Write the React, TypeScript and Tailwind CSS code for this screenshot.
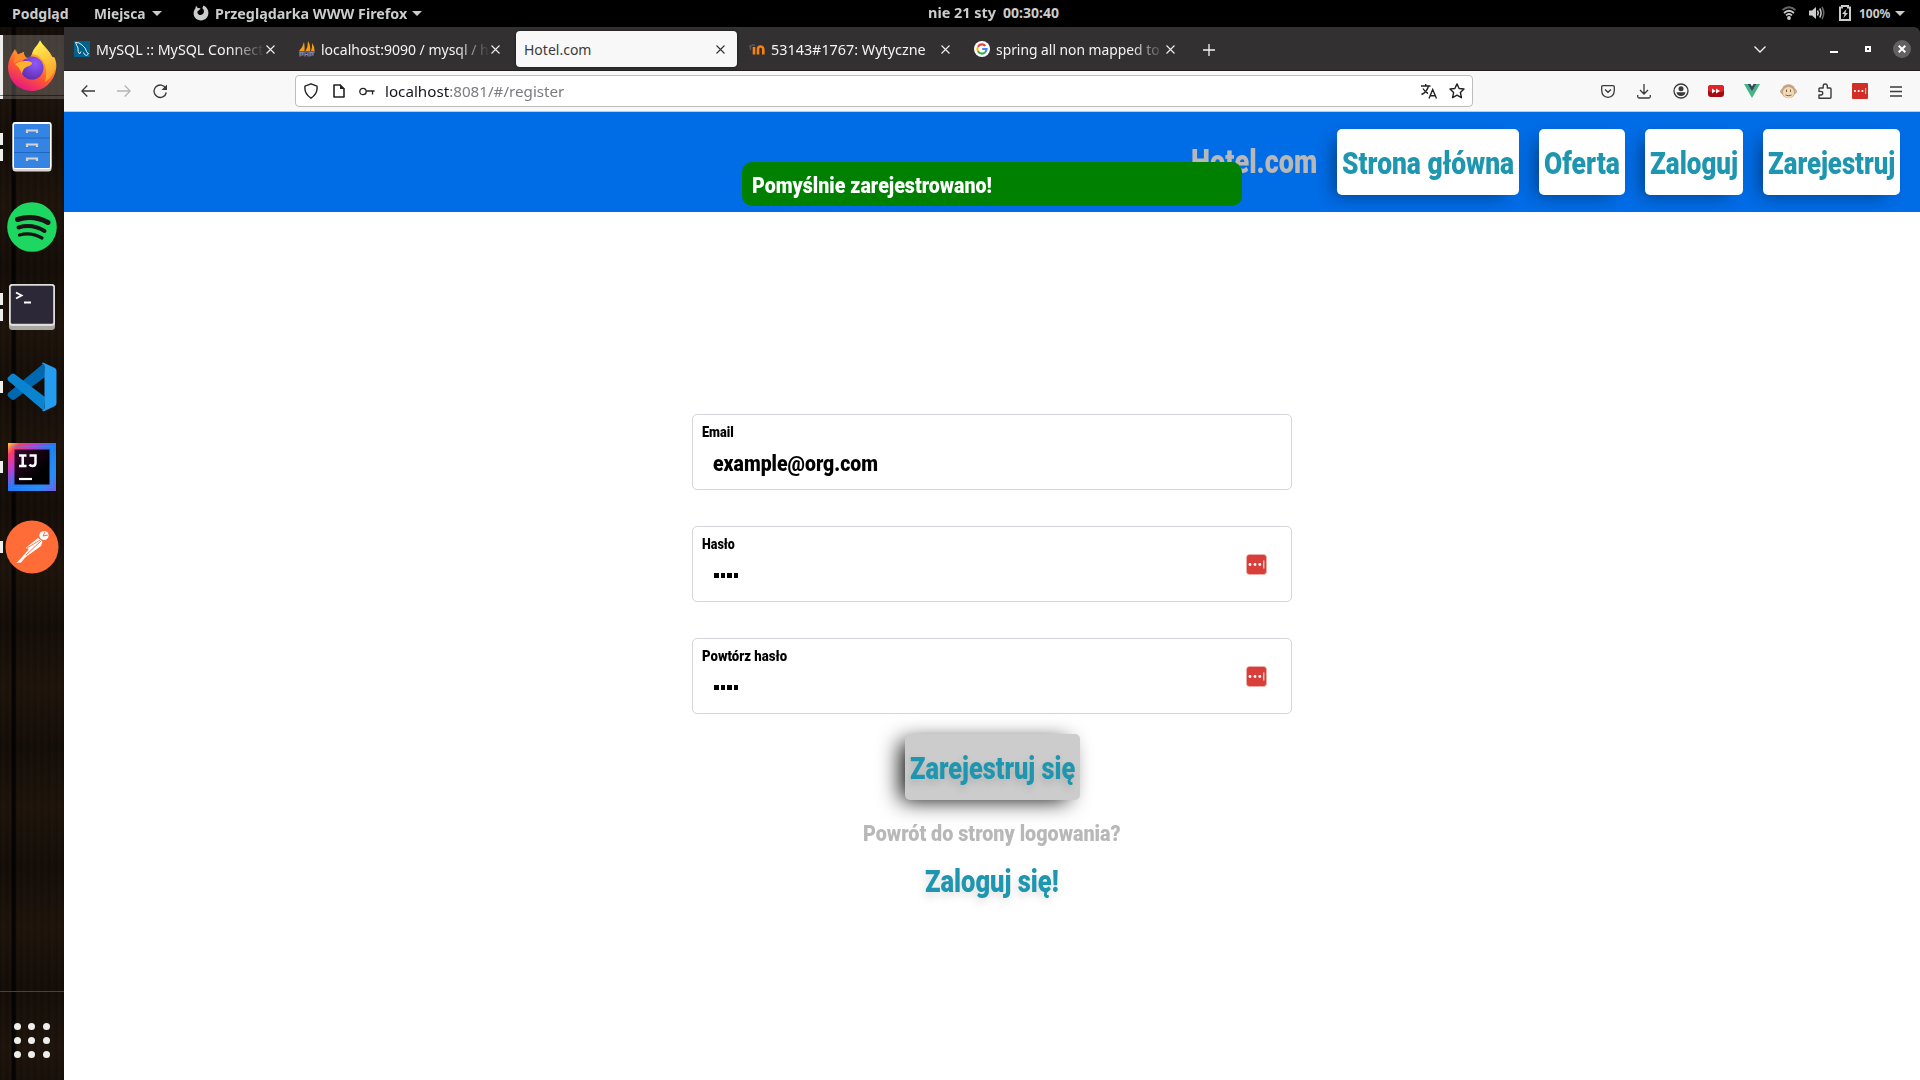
import { useLayoutEffect, useRef, useState, type ReactNode } from "react";

/** Single-line text that is condensed or stretched to fill a given width. */
function Fit({ w, className = "", children }: { w: number; className?: string; children: ReactNode }) {
  const ref = useRef<HTMLSpanElement>(null);
  const [k, setK] = useState(1);
  useLayoutEffect(() => {
    if (ref.current) setK(w / ref.current.offsetWidth);
  }, [w]);
  return (
    <span className="block shrink-0" style={{ width: w }}>
      <span
        ref={ref}
        className={"inline-block origin-left whitespace-nowrap align-top " + className}
        style={{ transform: `scaleX(${k})` }}
      >
        {children}
      </span>
    </span>
  );
}

function Caret({ className = "" }: { className?: string }) {
  return (
    <svg width="10" height="5" viewBox="0 0 10 5" className={"shrink-0 " + className}>
      <path d="M0 0H10L5 5Z" fill="#ccc" />
    </svg>
  );
}

function TopBar() {
  return (
    <header className="flex h-[27px] shrink-0 items-center bg-black pb-px font-['Noto_Sans'] text-[14px] leading-5 font-bold text-[#cccccc]">
      <div className="pt-px pl-3">
        <Fit w={57}>Podgląd</Fit>
      </div>
      <div className="w-[25px]" />
      <div className="pt-px">
        <Fit w={52}>Miejsca</Fit>
      </div>
      <Caret className="ml-[6px]" />
      <svg width="16" height="16" viewBox="0 0 16 16" className="mr-[6px] ml-[31px] shrink-0">
        <path
          d="M3 .8 5 3.2C6 2.8 7 3 7.6 3.8L5.6 5.4C4.4 6 4 7.2 4.8 8.4 6 10.400 9 10.400 10.300 8.600 11.600 6.700 11 4.500 9.300 3.300L10.400 .6C13.800 2 15.600 5 15.400 8.300 15.200 12.500 12 15.400 8 15.400 3.800 15.400.6 12.500.6 8.300.6 6 1.600 4.300 2.400 3.400Z"
          fill="#ccc"
        />
      </svg>
      <div className="pt-px">
        <Fit w={192}>Przeglądarka WWW Firefox</Fit>
      </div>
      <Caret className="ml-[5px]" />
      <div className="ml-[506px] flex gap-[7px]">
        <Fit w={68}>nie 21 sty</Fit>
        <Fit w={56}>00:30:40</Fit>
      </div>
      <div className="ml-auto flex items-center pr-[15px]">
        <svg width="14" height="14" viewBox="0 0 14 14" fill="none" strokeWidth="1.8" className="mr-[13px]">
          <path d="M.5 4Q7-1.500 13.500 4" stroke="#666" />
          <path d="M2 7Q7 2.400 12 7" stroke="#ccc" />
          <path d="M4 9.300Q7 6.600 10 9.300" stroke="#ccc" />
          <circle cx="7" cy="12" r="1.900" fill="#ccc" />
        </svg>
        <svg width="16" height="14" viewBox="0 0 16 14" fill="none" className="mr-[14px]">
          <path d="M0 4.500H3L7 1V13L3 9.500H0Z" fill="#ccc" />
          <path d="M8.500 4.500Q10 7 8.500 9.500M10.700 2.500Q13.500 7 10.700 11.500" stroke="#ccc" strokeWidth="1.500" />
          <path d="M13 1Q16.500 7 13 13" stroke="#666" strokeWidth="1.500" />
        </svg>
        <svg width="12" height="16" viewBox="0 0 12 16" className="mr-2">
          <path d="M3 1H9V2.500H11V15H1V2.500H3Z" fill="none" stroke="#ccc" strokeWidth="2" />
          <path d="M7.500 4 3 9H5.500L4.500 13 9 8H6.500Z" fill="#ccc" />
        </svg>
        <div className="pt-px">
          <Fit w={31} className="text-[12px]">100%</Fit>
        </div>
        <Caret className="ml-[5px]" />
      </div>
    </header>
  );
}

function FirefoxIcon() {
  return (
    <svg width="50" height="51" viewBox="0 0 50 51" className="mb-[3px]">
      <defs>
        <linearGradient id="ffBody" x1=".8" y1="0" x2=".3" y2="1">
          <stop offset="0" stopColor="#fff44f" />
          <stop offset=".35" stopColor="#ffa02e" />
          <stop offset=".65" stopColor="#ff5634" />
          <stop offset="1" stopColor="#e31587" />
        </linearGradient>
        <radialGradient id="ffGlobe" cx=".65" cy=".3" r=".8">
          <stop offset="0" stopColor="#9059ff" />
          <stop offset="1" stopColor="#5b2ba8" />
        </radialGradient>
        <linearGradient id="ffTail" x1=".3" y1="0" x2=".6" y2="1">
          <stop offset="0" stopColor="#fff44f" />
          <stop offset="1" stopColor="#ff9a2b" />
        </linearGradient>
      </defs>
      <path d="M8 9C9 12 10 13 11 14.500L17 12C16.500 16 19 18 22 19L33 .5C36 6 42 10 44 15 46 18 46 18 47 17 50 22 49.500 27 49 29 47 42 37 51 25 51 11 51 1 40 1 27 1 21 4 15 8 9Z" fill="url(#ffBody)" />
      <path d="M25 14C27 6 32 5 33 .5 36 6 42 10 44 15 46 18 46 18 47 17 50 24 48 36 38 42 40 35 41 22 30 15Z" fill="url(#ffTail)" />
      <circle cx="25" cy="28" r="11.500" fill="url(#ffGlobe)" />
      <path d="M8 24C12 21 20 20 24 22 26 23 25 25 22 26 18 27 16 29 15 34 13 30 13 28 8 24Z" fill="#ffb02e" />
      <path d="M9 9C9 12 10 13 11 14.500L17 12C16.500 15 18 17 21 18.500 13 19 10 22 7 23Z" fill="#ff8a2b" />
    </svg>
  );
}

function FilesIcon() {
  return (
    <svg width="40" height="50" viewBox="0 0 40 50">
      <rect x=".5" y="0" width="39" height="49.500" rx="3" fill="#d8d8d6" />
      <rect x=".5" y="0" width="39" height="47" rx="3" fill="#fff" />
      <rect x="2" y="2" width="36" height="44" rx="1" fill="#3584e4" />
      <path d="M2 16H38M2 30.500H38" stroke="#1f66c0" />
      <g fill="none" stroke="#d5d3cf" strokeWidth="2.200">
        <path d="M15 11V8.500H25V11M15 25V22.500H25V25M15 39V36.500H25V39" />
      </g>
    </svg>
  );
}

function SpotifyIcon() {
  return (
    <svg width="50" height="50" viewBox="0 0 50 50">
      <circle cx="25" cy="25" r="24.800" fill="#1ed760" />
      <g fill="none" stroke="#191414" strokeLinecap="round">
        <path d="M10.500 17.500Q26 12.500 41 20.500" strokeWidth="5" />
        <path d="M11.500 25.500Q25 21.500 37.500 29" strokeWidth="4" />
        <path d="M12.500 33Q24 29.800 35 36" strokeWidth="3.200" />
      </g>
    </svg>
  );
}

function TerminalIcon() {
  return (
    <svg width="46" height="46" viewBox="0 0 46 46">
      <rect width="46" height="46" rx="3.500" fill="#a9a7a3" />
      <rect width="46" height="42" rx="3.500" fill="#deddda" />
      <rect x="1.800" y="1.800" width="42.400" height="38" rx="1.500" fill="#2d2838" />
      <path d="M7 8.500 12.500 11.500 7 14.500M15 18.500H22" fill="none" stroke="#fff" strokeWidth="1.900" />
    </svg>
  );
}

function CodeIcon() {
  return (
    <svg width="50" height="50" viewBox="0 0 50 50">
      <path d="M37 1 38 15 7.500 37.500Q5.500 38.500 4 37L.8 34Q0 32.500 1 31Z" fill="#0068b0" />
      <path d="M37 49 38 35 7.500 12Q5.500 11 4 12.500L.8 15.500Q0 17 1 18.500Z" fill="#0a84d0" />
      <path d="M36 .5 48 6Q49.500 7 49.500 9V41Q49.500 43 48 44L37 49.300Q35.500 49.500 34.500 48.500 37 49 37.500 46V4Q37 1.500 34.500 1.300Z" fill="#249df0" />
    </svg>
  );
}

function IdeaIcon() {
  return (
    <svg width="48" height="48" viewBox="0 0 48 48">
      <defs>
        <linearGradient id="ijA" x1="0" y1="0" x2="1" y2="1">
          <stop offset="0" stopColor="#ffd43b" />
          <stop offset=".13" stopColor="#fc3b66" />
          <stop offset=".3" stopColor="#c03bd0" />
          <stop offset=".5" stopColor="#1f7cf5" />
          <stop offset=".8" stopColor="#2b8cf7" />
          <stop offset="1" stopColor="#7a58ea" />
        </linearGradient>
        <linearGradient id="ijB" x1="0" y1="0" x2="1" y2="1">
          <stop offset="0" stopColor="#38062f" />
          <stop offset=".7" stopColor="#000" />
        </linearGradient>
      </defs>
      <rect width="48" height="48" fill="url(#ijA)" />
      <rect x="3.500" y="3.500" width="41" height="41" fill="none" stroke="#17a7f4" strokeOpacity=".35" />
      <rect x="6.500" y="6.500" width="35" height="35" fill="url(#ijB)" />
      <path d="M11 12.500H18.500M14.700 12.500V23M11 23H18.500M21.500 12.500H27.500V20Q27.500 23 24.500 23 22.500 23 21.500 21.500" fill="none" stroke="#fff" strokeWidth="2.500" />
      <path d="M11 36H24" stroke="#fff" strokeWidth="2.200" />
    </svg>
  );
}

function PostmanIcon() {
  return (
    <svg width="54" height="54" viewBox="0 0 54 54">
      <circle cx="27" cy="27" r="26.500" fill="#ff6c37" />
      <circle cx="39" cy="15.500" r="4.600" fill="#fff" />
      <path d="M40 12 38 16 43 15" fill="none" stroke="#ff6c37" />
      <path d="M33 18 37.500 21.500 36 26 20 37.500 18.500 35.500 24 29 20.500 28Z" fill="#fff" />
      <path d="M36 21 21 35M35 20 22 28" stroke="#ff6c37" strokeWidth=".9" />
      <path d="M19 35 20.500 37 16 42.500 11.500 43Z" fill="#fff" />
    </svg>
  );
}

function DockItem({ marks, children, active = false }: { marks: number; children: ReactNode; active?: boolean }) {
  return (
    <div className={"relative flex h-16 w-16 shrink-0 items-center justify-center " + (active ? "bg-white/20" : "")}>
      {active ? (
        <div className="absolute top-0 left-0 h-full w-[3px] bg-[#eeeeec]" />
      ) : (
        <div className="absolute top-0 left-0 flex h-full flex-col justify-center gap-1">
          {Array.from({ length: marks }, (_, i) => (
            <div key={i} className="h-3 w-[3px] bg-[#eeeeec]" />
          ))}
        </div>
      )}
      {active && <div className="absolute bottom-[3px] left-0 h-px w-full bg-black/50" />}
      {children}
    </div>
  );
}

function Dock() {
  return (
    <nav className="flex w-16 shrink-0 flex-col bg-[#18100a] bg-[linear-gradient(90deg,transparent_11px,rgba(0,0,0,.75)_12px,rgba(0,0,0,.75)_15px,transparent_17px),repeating-linear-gradient(90deg,rgba(0,0,0,.14)_0px,rgba(90,60,30,.06)_3px,rgba(0,0,0,.06)_7px),repeating-linear-gradient(180deg,rgba(0,0,0,.2)_0px,rgba(80,55,30,.1)_60px,rgba(0,0,0,.2)_120px)]">
      <div className="flex flex-col gap-4 pt-2">
        <DockItem marks={0} active><FirefoxIcon /></DockItem>
        <DockItem marks={2}><FilesIcon /></DockItem>
        <DockItem marks={0}><SpotifyIcon /></DockItem>
        <DockItem marks={2}><TerminalIcon /></DockItem>
        <DockItem marks={1}><CodeIcon /></DockItem>
        <DockItem marks={1}><IdeaIcon /></DockItem>
        <DockItem marks={1}><PostmanIcon /></DockItem>
      </div>
      <div className="mt-auto h-[89px] border-t border-[#4a423c] pt-[31px]">
        <div className="mx-auto grid w-9 grid-cols-3 gap-x-[7px] gap-y-[7px]">
          {Array.from({ length: 9 }, (_, i) => (
            <div key={i} className="size-[7px] rounded-full bg-[#eeeeec]" />
          ))}
        </div>
      </div>
    </nav>
  );
}

function Cross({ dark = false }: { dark?: boolean }) {
  return (
    <svg width="9" height="9" viewBox="0 0 9 9" className="mr-3 ml-auto shrink-0">
      <path d="M.5.5 8.500 8.500M8.500.5.5 8.500" stroke={dark ? "#333" : "#f0f0f0"} strokeWidth="1.100" />
    </svg>
  );
}

function Tab({ icon, title, w, active = false, fade = false }: { icon?: ReactNode; title: string; w: number; active?: boolean; fade?: boolean }) {
  return (
    <div className={"flex h-9 w-[221px] shrink-0 items-center rounded pl-2 " + (active ? "bg-[#f8f8f8] text-[#3c3a3b] shadow-[0_0_3px_rgba(0,0,0,.6)]" : "text-[#f4f4f4]")}>
      {icon && <div className="mr-[6px] size-4 shrink-0">{icon}</div>}
      <div className={"w-[169px] shrink-0 pt-[2px] " + (fade ? "[mask-image:linear-gradient(90deg,#000_80%,transparent)]" : "")}>
        <Fit w={w} className="text-[14px]">{title}</Fit>
      </div>
      <Cross dark={active} />
    </div>
  );
}

function TabStrip() {
  return (
    <div className="flex h-11 shrink-0 items-start gap-1 rounded-tr-md border-b border-[#1f1d1e] bg-[#323031] pt-1 pl-[2px] font-['Noto_Sans'] leading-5">
      <Tab
        w={167}
        fade
        title="MySQL :: MySQL Connect"
        icon={
          <svg viewBox="0 0 16 16">
            <rect width="16" height="16" fill="#00618a" />
            <path d="M1.500 1.500Q5 1 8 4 12 7 12.500 10.500L14.500 13 12.500 14.500Q10 14 9.500 11.500M1.500 1.500Q3 5 4 7 3.500 11 5.500 13L7 10.500" fill="none" stroke="#e6f1f6" strokeWidth="1" />
          </svg>
        }
      />
      <Tab
        w={168}
        fade
        title="localhost:9090 / mysql / h"
        icon={
          <svg viewBox="0 0 16 16">
            <path d="M5 1Q6 6 5.500 10H0Q4 6 5 1ZM9 0Q12 5 11 10H6.500Q9 6 9 0ZM13 2Q16 6 15.500 10H12Q13.500 6 13 2Z" fill="#f89c0e" />
            <path d="M0 11H16M1 15.500V12H4V14H1M6 12V15.500M6 13.500H9M9 12V15.500M11 15.500V12H14V14H11" fill="none" stroke="#8485b4" strokeWidth="1.200" />
          </svg>
        }
      />
      <Tab w={67} active title="Hotel.com" />
      <Tab
        w={155}
        title="53143#1767: Wytyczne"
        icon={
          <svg viewBox="0 0 16 16" fill="none">
            <path d="M0 5.500 4 3.800 6 4.500M1.500 5V9" stroke="#5f5652" strokeWidth="1.500" />
            <path d="M5 13.500V6M9 13.500V8Q9 5.500 11.500 5.500T14.300 8V13.500" stroke="#f98012" strokeWidth="2.600" />
          </svg>
        }
      />
      <Tab
        w={164}
        fade
        title="spring all non mapped to"
        icon={
          <svg viewBox="0 0 16 16" fill="none" strokeWidth="2.100">
            <circle cx="8" cy="8" r="8" fill="#fff" />
            <path d="M11.400 4.900A4.600 4.600 0 0 0 4 5.700" stroke="#ea4335" />
            <path d="M4 5.700A4.600 4.600 0 0 0 4 10.300" stroke="#fbbc05" />
            <path d="M4 10.300A4.600 4.600 0 0 0 11 11.500" stroke="#34a853" />
            <path d="M11 11.500A4.600 4.600 0 0 0 12.600 8H8.200" stroke="#4285f4" />
          </svg>
        }
      />
      <svg width="12" height="12" viewBox="0 0 12 12" className="mt-[13px] ml-[12px]">
        <path d="M6 0V12M0 6H12" stroke="#f4f4f4" strokeWidth="1.300" />
      </svg>
      <div className="mt-[9px] mr-[9px] ml-auto flex h-[18px] items-center">
        <svg width="12" height="7" viewBox="0 0 12 7" className="mr-16" fill="none">
          <path d="M.5.5 6 6 11.500.5" stroke="#f4f4f4" strokeWidth="1.300" />
        </svg>
        <div className="mt-[6px] mr-[27px] h-[2px] w-2 bg-white" />
        <div className="mr-[22px] size-[6px] border-2 border-white" />
        <div className="flex size-[18px] items-center justify-center rounded-full bg-[#636263]">
          <svg width="8" height="8" viewBox="0 0 8 8">
            <path d="M.7.7 7.300 7.300M7.300.7.7 7.300" stroke="#fff" strokeWidth="2" />
          </svg>
        </div>
      </div>
    </div>
  );
}

function PasswordBadge() {
  return (
    <svg width="21" height="21" viewBox="0 0 21 21">
      <rect x=".5" y=".5" width="20" height="20" rx="3" fill="#d93f3a" stroke="#f0b5b2" strokeWidth=".6" />
      <g fill="#fff">
        <circle cx="4" cy="10.500" r="1.400" />
        <circle cx="9" cy="10.500" r="1.400" />
        <circle cx="13.800" cy="10.500" r="1.400" />
        <rect x="17.300" y="6.500" width="1" height="8" />
      </g>
    </svg>
  );
}

function Toolbar() {
  return (
    <div className="flex h-[41px] shrink-0 items-center border-b border-[#c9c9cb] bg-[#f8f8f8] pl-[17px] font-['Noto_Sans']">
      <svg width="14" height="12" viewBox="0 0 14 12" fill="none" stroke="#3a3a3a" strokeWidth="1.300">
        <path d="M14 6H1M6.300.5.800 6 6.300 11.500" />
      </svg>
      <svg width="14" height="12" viewBox="0 0 14 12" fill="none" stroke="#b4b4b4" strokeWidth="1.300" className="ml-[22px]">
        <path d="M0 6H13M7.700.5 13.200 6 7.700 11.500" />
      </svg>
      <svg width="15" height="15" viewBox="0 0 15 15" fill="none" className="ml-[22px]">
        <path d="M12.800 4.500A6.200 6.200 0 1 0 13.300 8.500" stroke="#3a3a3a" strokeWidth="1.400" />
        <path d="M14 .5V6H8.500Z" fill="#3a3a3a" />
      </svg>
      <div className="ml-[127px] flex h-8 w-[1178px] shrink-0 items-center rounded border border-[#bdbdc0] bg-white pl-2 text-[#222]">
        <svg width="14" height="16" viewBox="0 0 14 16" fill="none" stroke="#222" strokeWidth="1.400">
          <path d="M7 .8 13 3.200Q14 10.500 7 15.200 0 10.500 1 3.200Z" strokeLinejoin="round" />
        </svg>
        <svg width="12" height="14" viewBox="0 0 12 14" className="ml-[15px]">
          <path d="M1 1H7L11 5V13H1Z" fill="none" stroke="#222" strokeWidth="1.600" strokeLinejoin="round" />
          <path d="M7 0V5H12Z" fill="#222" />
        </svg>
        <svg width="16" height="9" viewBox="0 0 16 9" fill="none" stroke="#222" strokeWidth="1.300" className="mr-[10px] ml-[14px]">
          <circle cx="4" cy="4.500" r="3.200" />
          <path d="M7.200 4H15.500M13.500 4V7.500" />
        </svg>
        <div className="pt-[3px]">
          <Fit w={179} className="text-[14.500px] leading-5">
            <span className="text-[#15141a]">localhost</span>
            <span className="text-[#7b7b80]">:8081/#/register</span>
          </Fit>
        </div>
        <svg width="16" height="15" viewBox="0 0 16 15" fill="none" stroke="#222" strokeWidth="1.400" className="mr-3 ml-auto">
          <path d="M0 2H9.500M4.700 0V2M7.500 2Q6 8 .5 10.500M2 4.500Q4 8 7 9.500M8 14.500 11.700 5.500 15.500 14.500M9.300 11.700H14.200" />
        </svg>
        <svg width="16" height="16" viewBox="0 0 16 16" fill="none" stroke="#222" strokeWidth="1.400" strokeLinejoin="round" className="mr-[7px]">
          <path d="M8 .9 10.100 5.500 15 6 11.400 9.500 12.400 14.700 8 12.200 3.600 14.700 4.600 9.500 1 6 5.900 5.500Z" />
        </svg>
      </div>
      <div className="mr-[18px] ml-auto flex items-center">
        <svg width="14" height="13" viewBox="0 0 14 13" fill="none" stroke="#3a3a3a" strokeWidth="1.300">
          <path d="M2 .7H12Q13.300.7 13.300 2V5.500Q13 12 7 12.300 1 12 .7 5.500V2Q.7.700 2 .7ZM4 4.500 7 7.300 10 4.500" />
        </svg>
        <svg width="14" height="15" viewBox="0 0 14 15" fill="none" stroke="#3a3a3a" strokeWidth="1.300" className="ml-[22px]">
          <path d="M7 0V10M3 6 7 10 11 6M.7 11V12.500Q.7 14 2 14H12Q13.300 14 13.300 12.500V11" />
        </svg>
        <svg width="16" height="16" viewBox="0 0 16 16" className="ml-[22px]">
          <circle cx="8" cy="8" r="7" fill="none" stroke="#3a3a3a" strokeWidth="1.300" />
          <circle cx="8" cy="5.800" r="2.500" fill="#3a3a3a" />
          <path d="M3.500 9.300H12.500Q12 13 8 13T3.500 9.300Z" fill="#3a3a3a" />
        </svg>
        <svg width="16" height="12" viewBox="0 0 16 12" className="ml-[19px]">
          <rect width="16" height="12" rx="3" fill="#a60a10" />
          <rect width="16" height="7" rx="3" fill="#e0242a" />
          <path d="M4 3.500 7.500 6 4 8.500ZM8 3.500 12 6 8 8.500Z" fill="#fff" />
        </svg>
        <svg width="16" height="14" viewBox="0 0 16 14" className="mb-px ml-5">
          <path d="M0 0H3.500L8 7.500 12.500 0H16L8 14Z" fill="#41b883" />
          <path d="M3.500 0H6.500L8 2.500 9.500 0H12.500L8 7.500Z" fill="#35495e" />
        </svg>
        <svg width="17" height="16" viewBox="0 0 17 16" className="ml-5">
          <circle cx="2.300" cy="8.500" r="1.900" fill="#e9c9a4" stroke="#bd9a78" strokeWidth=".8" />
          <circle cx="14.700" cy="8.500" r="1.900" fill="#e9c9a4" stroke="#bd9a78" strokeWidth=".8" />
          <circle cx="8.500" cy="8.300" r="7" fill="#c2a283" />
          <ellipse cx="8.500" cy="9.500" rx="5.600" ry="5.500" fill="#f2d9b5" />
          <path d="M6.500 6.500V9M10.500 6.500V9M5.500 12Q8.500 13.500 11.500 12" stroke="#766150" fill="none" />
        </svg>
        <svg width="14" height="16" viewBox="0 0 14 16" fill="none" stroke="#3a3a3a" strokeWidth="1.400" className="ml-[21px]">
          <path d="M1 15.200H12Q13 15.200 13 14.200V6Q13 5 12 5H9.300V2.700Q9 1 7.200 1T5.200 2.700V5H2Q1 5 1 6V8.500Q4.800 8 4.800 10.200T1 12Z" strokeLinejoin="round" />
        </svg>
        <svg width="16" height="16" viewBox="0 0 16 16" className="ml-5">
          <rect width="16" height="16" rx="1" fill="#d32d27" />
          <g fill="#fff">
            <circle cx="3" cy="8" r="1.100" />
            <circle cx="6.700" cy="8" r="1.100" />
            <circle cx="10.400" cy="8" r="1.100" />
            <rect x="13.300" y="5" width=".8" height="6" />
          </g>
        </svg>
        <svg width="12" height="11" viewBox="0 0 12 11" className="ml-[22px]">
          <path d="M0 1H12M0 5.500H12M0 10H12" stroke="#3a3a3a" strokeWidth="1.300" />
        </svg>
      </div>
    </div>
  );
}

function NavButton({ label, w }: { label: string; w: number }) {
  return (
    <button className="h-[66px] rounded-[5px] bg-white px-[5px] text-[31px] leading-[70px] text-[#1f96b0] shadow-[-8px_6px_18px_-6px_rgba(0,0,0,.45)]">
      <Fit w={w}>{label}</Fit>
    </button>
  );
}

function Field({ label, labelW, children, badge = false }: { label: string; labelW: number; children: ReactNode; badge?: boolean }) {
  return (
    <div className="flex h-[76px] w-[600px] items-center justify-between rounded-[5px] border border-[#d4d4dc] pr-6 pl-[9px] text-black">
      <div className="flex h-full flex-col pt-[7px]">
        <Fit w={labelW} className="text-[15.500px] leading-5">{label}</Fit>
        <div className="mt-[3px] ml-[11px] h-7">{children}</div>
      </div>
      {badge && <PasswordBadge />}
    </div>
  );
}

function MaskedValue() {
  return (
    <div className="flex gap-[2px] pt-[12px] pl-[1px]">
      {[0, 1, 2, 3].map((i) => (
        <div key={i} className="h-[5px] w-[4.500px] bg-black" />
      ))}
    </div>
  );
}

function Page() {
  return (
    <main className="relative flex min-h-0 flex-1 flex-col bg-white font-['Roboto'] font-black">
      <div className="flex h-[100px] shrink-0 items-center justify-end gap-5 bg-[#006ce6] pr-5">
        <Fit w={126} className="text-[33px] leading-[70px] text-[#b8b8b8]">Hotel.com</Fit>
        <NavButton label="Strona główna" w={172} />
        <NavButton label="Oferta" w={76} />
        <NavButton label="Zaloguj" w={88} />
        <NavButton label="Zarejestruj" w={127} />
      </div>
      <div className="absolute top-[50px] left-[678px] h-11 w-[500px] rounded-[10px] bg-[#008000] pl-[10px] text-[22.500px] leading-[46px] text-white">
        <Fit w={240}>Pomyślnie zarejestrowano!</Fit>
      </div>
      <div className="mt-[202px] flex flex-col items-center">
        <div className="flex flex-col gap-9">
          <Field label="Email" labelW={32}>
            <Fit w={165} className="text-[22.500px] leading-7">example@org.com</Fit>
          </Field>
          <Field label="Hasło" labelW={33} badge><MaskedValue /></Field>
          <Field label="Powtórz hasło" labelW={85} badge><MaskedValue /></Field>
        </div>
        <button className="mt-5 h-[66px] rounded-[5px] bg-[#cccccc] px-[5px] text-[31px] leading-[70px] text-[#1f96b0] shadow-[-8px_4px_22px_-4px_#000] text-shadow-[-2px_4px_10px_rgba(0,0,0,.15)]">
          <Fit w={165}>Zarejestruj się</Fit>
        </button>
        <div className="mt-[17px] text-[22.500px] leading-8 text-[#b8b8b8]">
          <Fit w={258}>Powrót do strony logowania?</Fit>
        </div>
        <div className="mt-[13px] text-[31px] leading-10 text-[#1f96b0] text-shadow-[-2px_4px_10px_rgba(0,0,0,.15)]">
          <Fit w={134}>Zaloguj się!</Fit>
        </div>
      </div>
    </main>
  );
}

export default function App() {
  return (
    <div className="flex h-[1080px] w-[1920px] flex-col overflow-hidden bg-black">
      <TopBar />
      <div className="flex min-h-0 flex-1">
        <Dock />
        <div className="flex min-w-0 flex-1 flex-col">
          <TabStrip />
          <Toolbar />
          <Page />
        </div>
      </div>
    </div>
  );
}
